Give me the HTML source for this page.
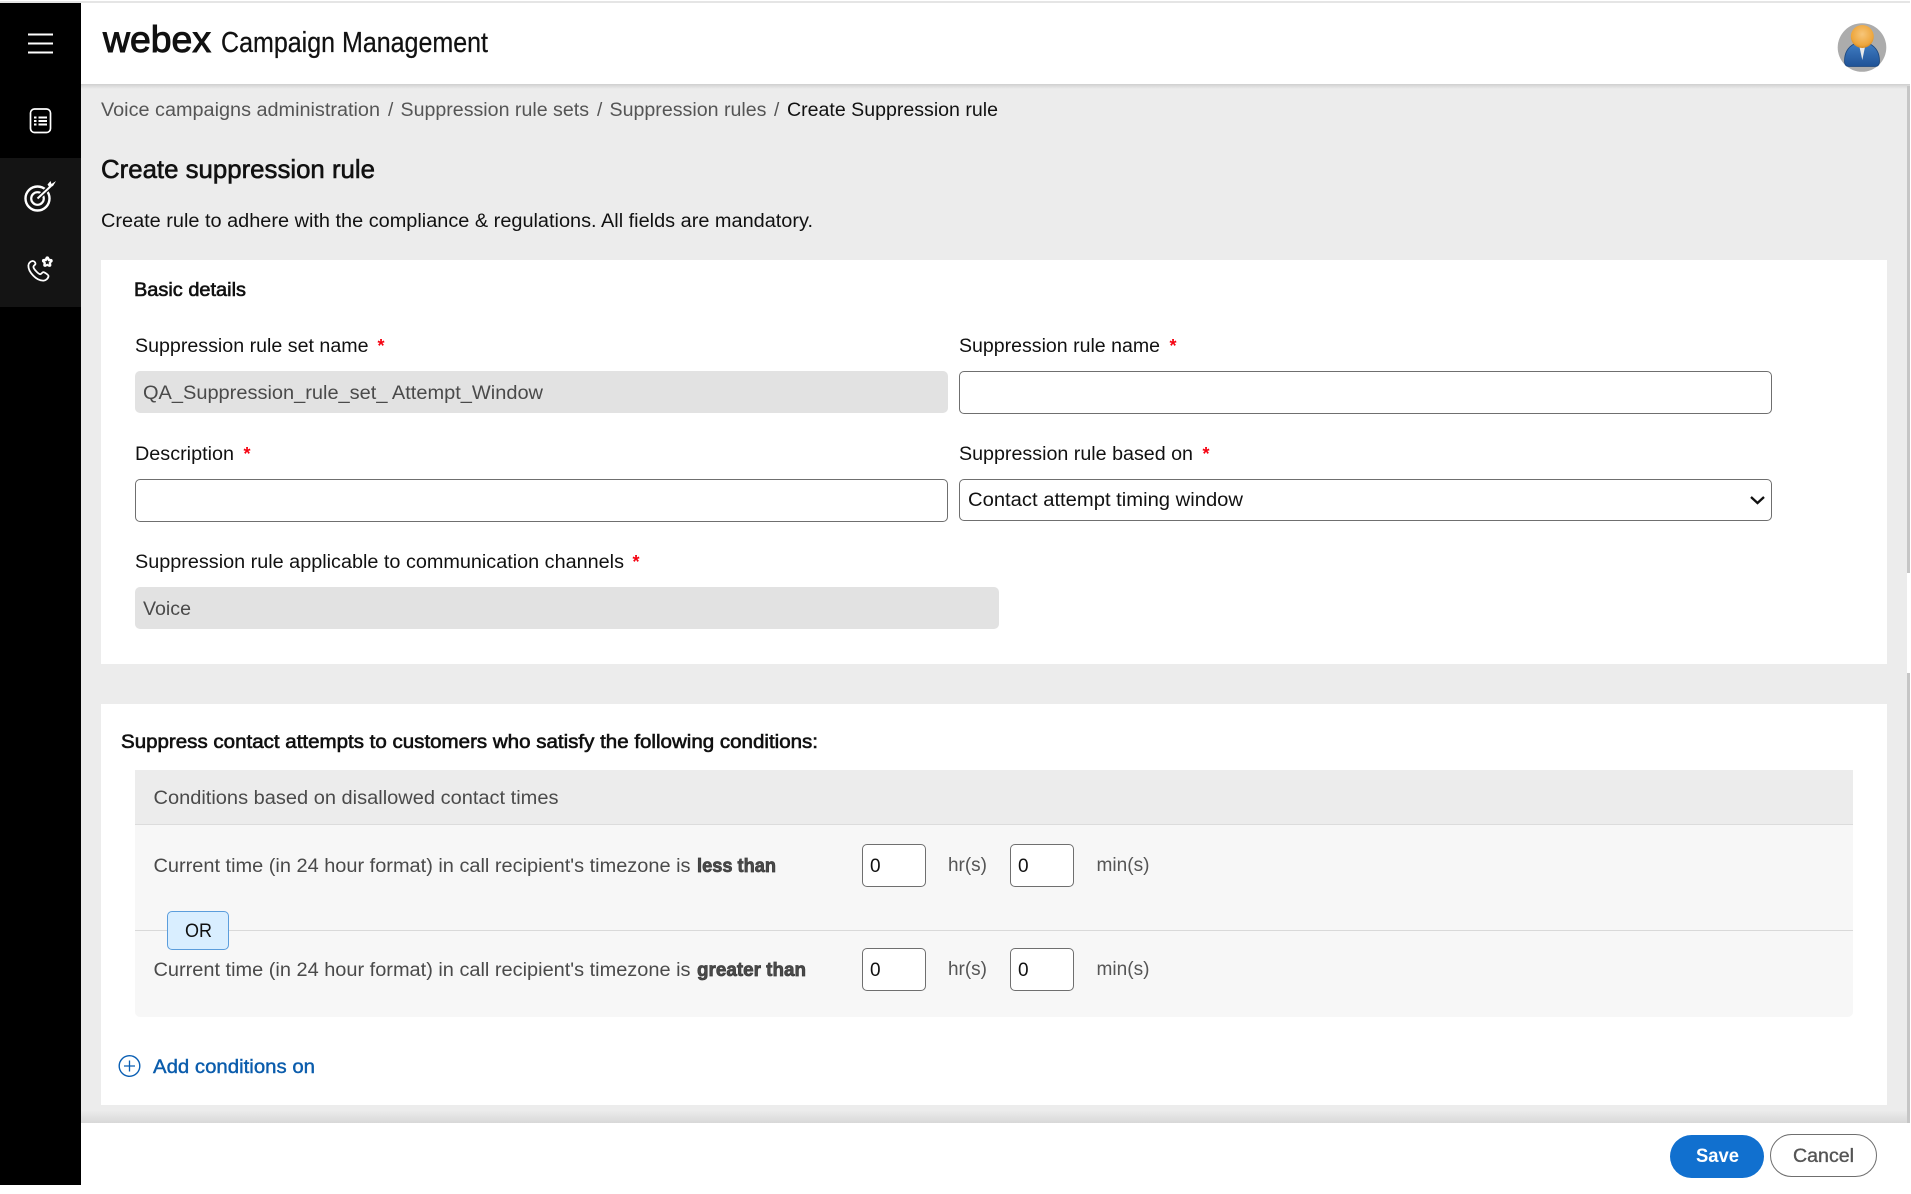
<!DOCTYPE html>
<html lang="en">
<head>
<meta charset="utf-8">
<title>Create suppression rule</title>
<style>
html,body{margin:0;padding:0;width:1911px;height:1194px;overflow:hidden;background:#fff}
.b{position:absolute;box-sizing:border-box}
.in{background:#fff;border:1.5px solid #6f6f6f;border-radius:5px}
.ro{background:#e2e2e2;border-radius:5px}
svg.t{position:absolute;left:0;top:0}
svg.t text{font-family:"Liberation Sans",sans-serif;font-size:19px;fill:#111}
.g{fill:#555!important}
.d{fill:#4a4a4a!important}
.m{stroke:#111;stroke-width:.6px}
.r{fill:#f5000f!important;font-weight:bold;font-size:18px!important}
.k{stroke:#3c3c3c;stroke-width:.7px}
</style>
</head>
<body>
<!-- page background -->
<div class="b" style="left:0;top:1px;width:1910px;height:2px;background:#e5e5e5"></div>
<div class="b" style="left:81px;top:84px;width:1826px;height:1039px;background:#ececec"></div>
<div class="b" style="left:81px;top:84px;width:1829px;height:5px;background:linear-gradient(#cfcfcf,#ececec)"></div>
<div class="b" style="left:81px;top:1105px;width:1826px;height:18px;background:linear-gradient(#ececec 30%,#d8d8d8)"></div>
<!-- scrollbar -->
<div class="b" style="left:1907px;top:86px;width:3px;height:487px;background:#c6c6c6"></div>
<div class="b" style="left:1907px;top:673px;width:3px;height:450px;background:#c6c6c6"></div>
<!-- sidebar -->
<div class="b" style="left:0;top:3px;width:81px;height:1182px;background:#000"></div>
<div class="b" style="left:0;top:158px;width:81px;height:149px;background:#141414"></div>
<!-- cards -->
<div class="b" style="left:101px;top:260px;width:1786px;height:404px;background:#fff"></div>
<div class="b" style="left:101px;top:704px;width:1786px;height:401px;background:#fff"></div>
<!-- top inputs -->
<div class="b ro" style="left:135px;top:371px;width:813px;height:42px"></div>
<div class="b in" style="left:959px;top:371px;width:813px;height:43px"></div>
<div class="b in" style="left:135px;top:479px;width:813px;height:43px"></div>
<div class="b in" style="left:959px;top:479px;width:813px;height:42px"></div>
<div class="b ro" style="left:135px;top:587px;width:864px;height:42px"></div>
<!-- conditions -->
<div class="b" style="left:135px;top:770px;width:1718px;height:247px;background:#f7f7f7;border-radius:0 0 5px 5px"></div>
<div class="b" style="left:135px;top:770px;width:1718px;height:55px;background:#ececec;border-bottom:1px solid #dcdcdc"></div>
<div class="b" style="left:135px;top:930px;width:1718px;height:1px;background:#d9d9d9"></div>
<div class="b" style="left:167px;top:911px;width:62px;height:39px;background:#d9eeff;border:1.5px solid #5b9ddc;border-radius:5px"></div>
<div class="b in" style="left:862px;top:844px;width:64px;height:43px"></div>
<div class="b in" style="left:1010px;top:844px;width:64px;height:43px"></div>
<div class="b in" style="left:862px;top:948px;width:64px;height:43px"></div>
<div class="b in" style="left:1010px;top:948px;width:64px;height:43px"></div>
<!-- buttons -->
<div class="b" style="left:1670px;top:1135px;width:94px;height:43px;background:#1170cf;border-radius:22px"></div>
<div class="b" style="left:1770px;top:1134px;width:107px;height:43px;background:#fff;border:1.5px solid #6f6f6f;border-radius:22px"></div>

<svg class="t" width="1911" height="1194" viewBox="0 0 1911 1194" xmlns="http://www.w3.org/2000/svg">
  <!-- sidebar icons -->
  <g stroke="#fff" fill="none">
    <path d="M28 34.500H53M28 43.500H53M28 52.500H53" stroke-width="2"/>
    <rect x="30.500" y="109" width="20" height="23.500" rx="4" stroke-width="1.700"/>
    <path d="M34 117.500h2.500M38.500 117.500h8.500M34 121h2.500M38.500 121h8.500M34 124.500h2.500M38.500 124.500h8.500" stroke-width="1.900"/>
    <circle cx="37.500" cy="198.500" r="12" stroke-width="2.400"/>
    <circle cx="37.500" cy="198.500" r="6.300" stroke-width="2.200"/>
    <path d="M37.500 198.500L54 183" stroke="#141414" stroke-width="4.500"/>
    <path d="M37.500 198.500L51 186" stroke-width="2"/>
    <path d="M47.500 184.500l3-3.500 1 3 4.500-3-3 5-3.500 1.500z" fill="#fff" stroke="none"/>
    <path d="M32.500 261c-2.300.3-4 2.300-4.100 4.600-.3 6.200 8.100 15.600 15.300 15 2.500-.2 4.800-2.500 4.800-4.700 0-1-4.300-4-5.300-3.800-1.200.3-1.800 2.100-2.900 2.100-2 0-6.900-5.500-6.900-7.500 0-1 1.900-1.700 2.100-2.900.1-.9-1-2.900-3-2.800z" stroke-width="1.800"/>
  </g>
  <g>
    <circle cx="47.300" cy="262" r="4.200" fill="#fff"/>
    <circle cx="47.300" cy="258.300" r="1.900" fill="#fff"/><circle cx="50.800" cy="260.800" r="1.900" fill="#fff"/><circle cx="49.500" cy="265" r="1.900" fill="#fff"/><circle cx="45.100" cy="265" r="1.900" fill="#fff"/><circle cx="43.800" cy="260.800" r="1.900" fill="#fff"/>
    <path d="M47.300 259.500l.8 1.700 1.800.2-1.300 1.300.3 1.800-1.600-.9-1.600.9.300-1.800-1.300-1.300 1.800-.2z" fill="#141414"/>
  </g>
  <!-- avatar -->
  <defs>
    <radialGradient id="o" cx="50%" cy="40%" r="60%"><stop offset="0" stop-color="#f7c67a"/><stop offset=".8" stop-color="#eea63c"/><stop offset="1" stop-color="#d58a24"/></radialGradient>
    <linearGradient id="bl" x1="0" y1="0" x2="0" y2="1"><stop offset="0" stop-color="#3f7cc2"/><stop offset="1" stop-color="#1f5296"/></linearGradient>
  </defs>
  <circle cx="1862" cy="47.500" r="24.300" fill="#acacac"/>
  <path d="M1849 66.500c-3 0-4.500-2-4.500-5.500 0-8 3-13.500 9.500-17h16c6.500 3.500 9.500 9 9.500 17 0 3.500-1.500 5.500-4.500 5.500z" fill="url(#bl)" stroke="#1b477f" stroke-width=".8"/>
  <path d="M1859.500 47h5.500l-2.700 13z" fill="#eaeaea"/>
  <circle cx="1862.300" cy="36.500" r="11.500" fill="url(#o)"/>
  <!-- add icon -->
  <circle cx="129.500" cy="1066" r="10.300" fill="none" stroke="#0a5fb4" stroke-width="1.400"/>
  <path d="M129.500 1060.500v11M124 1066h11" stroke="#0a5fb4" stroke-width="1.300" fill="none"/>
  <!-- chevron -->
  <path d="M1751 497l6.500 6 6.500-6" fill="none" stroke="#111" stroke-width="2.300"/>

  <!-- header -->
  <text x="103" y="52" style="font-size:37px;stroke:#111;stroke-width:1px" textLength="108" lengthAdjust="spacingAndGlyphs">webex</text>
  <text x="221" y="52" style="font-size:29px;stroke:#111;stroke-width:.25px" textLength="267" lengthAdjust="spacingAndGlyphs">Campaign Management</text>

  <!-- breadcrumb -->
  <text class="g" x="101" y="116" textLength="279" lengthAdjust="spacingAndGlyphs">Voice campaigns administration</text>
  <text class="g" x="388" y="116">/</text>
  <text class="g" x="400.500" y="116" textLength="188.500" lengthAdjust="spacingAndGlyphs">Suppression rule sets</text>
  <text class="g" x="597" y="116">/</text>
  <text class="g" x="609.500" y="116" textLength="157" lengthAdjust="spacingAndGlyphs">Suppression rules</text>
  <text class="g" x="774" y="116">/</text>
  <text x="787" y="116" textLength="211" lengthAdjust="spacingAndGlyphs">Create Suppression rule</text>

  <text class="m" x="101" y="178" style="font-size:26px" textLength="274" lengthAdjust="spacingAndGlyphs">Create suppression rule</text>
  <text x="101" y="227" textLength="712" lengthAdjust="spacingAndGlyphs">Create rule to adhere with the compliance &amp; regulations. All fields are mandatory.</text>

  <text class="m" x="134" y="296" textLength="112" lengthAdjust="spacingAndGlyphs">Basic details</text>

  <text x="135" y="352" textLength="233.500" lengthAdjust="spacingAndGlyphs">Suppression rule set name</text>
  <text class="r" x="377.500" y="352">*</text>
  <text x="959" y="352" textLength="201" lengthAdjust="spacingAndGlyphs">Suppression rule name</text>
  <text class="r" x="1169.500" y="352">*</text>
  <text class="d" x="143" y="399" textLength="400" lengthAdjust="spacingAndGlyphs">QA_Suppression_rule_set_ Attempt_Window</text>

  <text x="135" y="460" textLength="99" lengthAdjust="spacingAndGlyphs">Description</text>
  <text class="r" x="243.500" y="460">*</text>
  <text x="959" y="460" textLength="234" lengthAdjust="spacingAndGlyphs">Suppression rule based on</text>
  <text class="r" x="1202.500" y="460">*</text>
  <text x="968" y="506" textLength="275" lengthAdjust="spacingAndGlyphs">Contact attempt timing window</text>

  <text x="135" y="568" textLength="489" lengthAdjust="spacingAndGlyphs">Suppression rule applicable to communication channels</text>
  <text class="r" x="632.500" y="568">*</text>
  <text class="d" x="143" y="615" textLength="48" lengthAdjust="spacingAndGlyphs">Voice</text>

  <text class="m" x="121" y="748" textLength="697" lengthAdjust="spacingAndGlyphs">Suppress contact attempts to customers who satisfy the following conditions:</text>
  <text class="d" x="153.500" y="804" textLength="405" lengthAdjust="spacingAndGlyphs">Conditions based on disallowed contact times</text>

  <text class="d" x="153.500" y="872" textLength="537" lengthAdjust="spacingAndGlyphs">Current time (in 24 hour format) in call recipient's timezone is</text>
  <text class="d k" x="697" y="872" style="font-weight:bold" textLength="79" lengthAdjust="spacingAndGlyphs">less than</text>
  <text x="870" y="872">0</text>
  <text class="g" x="948" y="871" textLength="39" lengthAdjust="spacingAndGlyphs">hr(s)</text>
  <text x="1018" y="872">0</text>
  <text class="g" x="1096.500" y="871" textLength="53" lengthAdjust="spacingAndGlyphs">min(s)</text>

  <text x="185" y="937" textLength="27" lengthAdjust="spacingAndGlyphs">OR</text>

  <text class="d" x="153.500" y="976" textLength="537" lengthAdjust="spacingAndGlyphs">Current time (in 24 hour format) in call recipient's timezone is</text>
  <text class="d k" x="697" y="976" style="font-weight:bold" textLength="109" lengthAdjust="spacingAndGlyphs">greater than</text>
  <text x="870" y="976">0</text>
  <text class="g" x="948" y="975" textLength="39" lengthAdjust="spacingAndGlyphs">hr(s)</text>
  <text x="1018" y="976">0</text>
  <text class="g" x="1096.500" y="975" textLength="53" lengthAdjust="spacingAndGlyphs">min(s)</text>

  <text x="153" y="1073" style="fill:#0a5cac;stroke:#0a5cac;stroke-width:.4px" textLength="162" lengthAdjust="spacingAndGlyphs">Add conditions on</text>

  <text x="1696" y="1162" style="fill:#fff;font-weight:bold" textLength="43" lengthAdjust="spacingAndGlyphs">Save</text>
  <text class="g" x="1793" y="1162" style="stroke:#555;stroke-width:.35px" textLength="61" lengthAdjust="spacingAndGlyphs">Cancel</text>
</svg>
</body>
</html>
